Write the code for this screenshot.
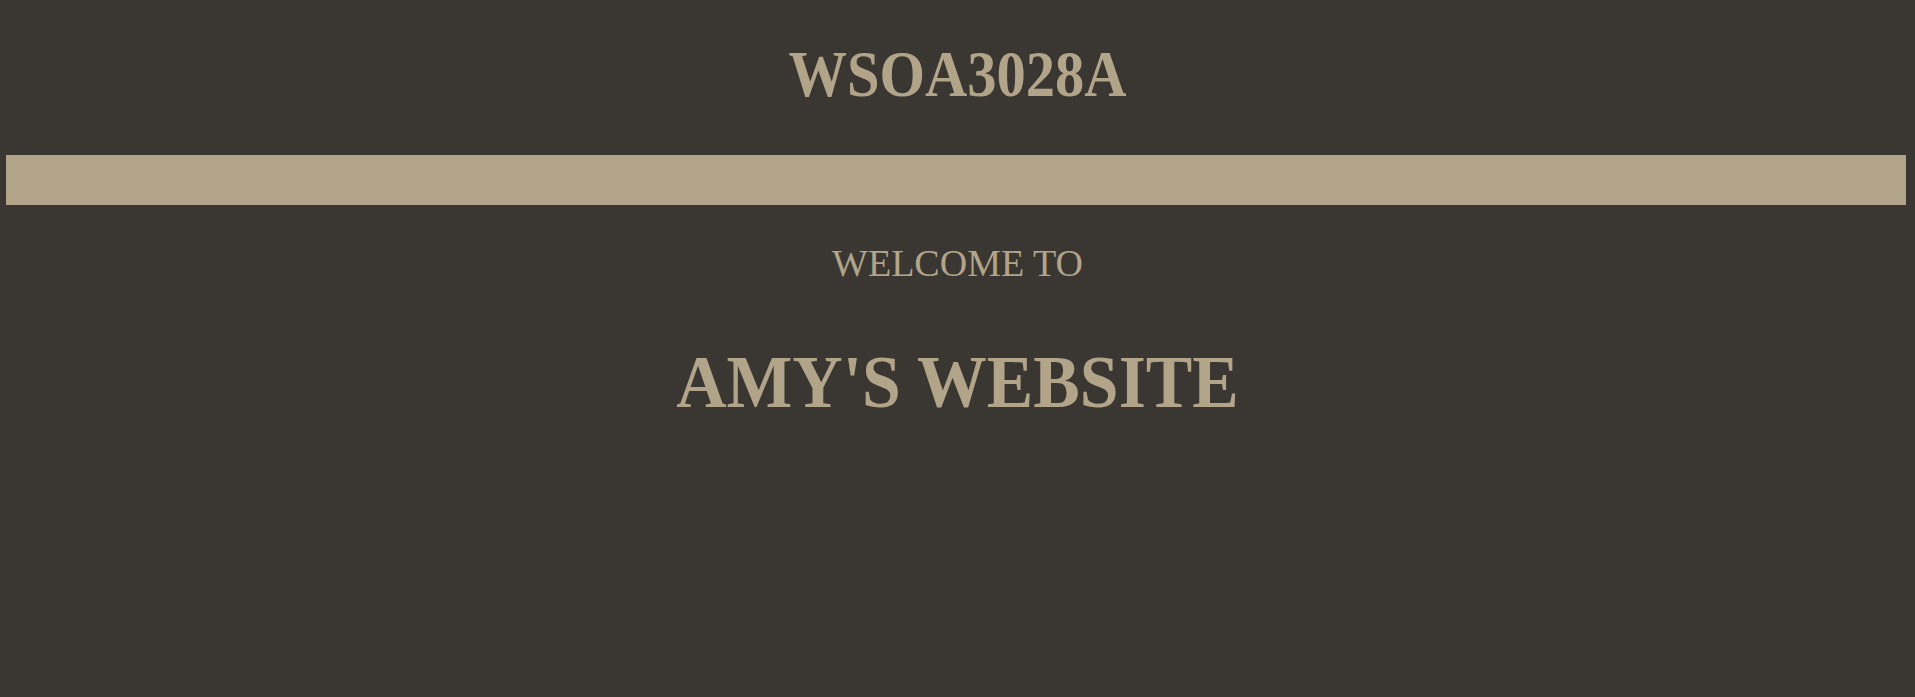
import React from 'react';

const serif = "font-['Liberation_Serif','Times_New_Roman',serif]";

const App = () => {
  return (
    <div className={`min-h-[697px] w-full bg-[#3a3733] text-[#b2a489] ${serif} overflow-hidden`}>
      {/* Course code */}
      <header className="pt-[42px]">
        <h1 className="text-center text-[65px] leading-none font-bold scale-x-[0.9]">WSOA3028A</h1>
      </header>

      {/* Divider bar */}
      <div className="mt-[48px] ml-[6px] mr-[9px] h-[50px] bg-[#b2a489]"></div>

      {/* Hero */}
      <section className="text-center">
        <p className="mt-[39px] text-[38px] leading-none font-normal">WELCOME TO</p>
        <h2 className="mt-[62px] text-[75px] leading-none font-bold scale-x-[0.93]">AMY'S WEBSITE</h2>
      </section>
    </div>
  );
};

export default App;
